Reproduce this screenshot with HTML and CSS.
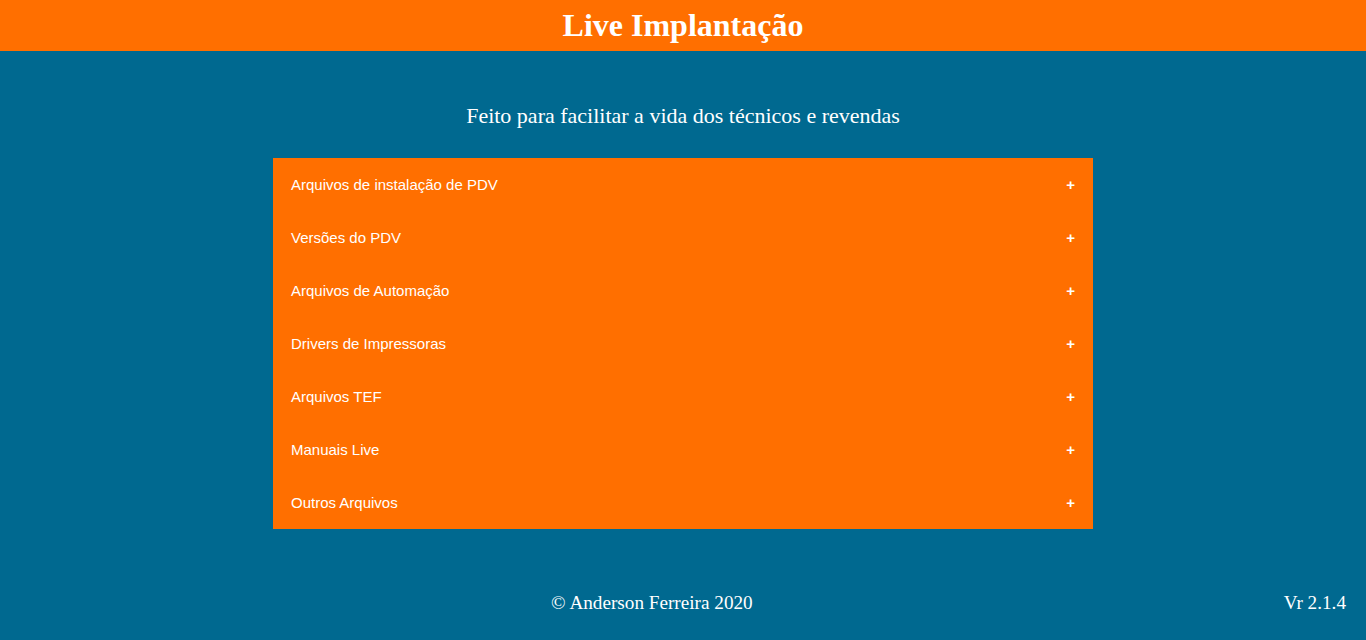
FILE: index.html
```html
<!DOCTYPE html>
<html lang="pt-BR">
<head>
<meta charset="utf-8">
<title>Live Implantação</title>
<link rel="stylesheet" href="styles.css">
</head>
<body>
<header class="topbar"><h1 class="title">Live Implantação</h1></header>
<main class="content">
  <p class="subtitle">Feito para facilitar a vida dos técnicos e revendas</p>
  <div class="accordion">
    <div class="row"><span>Arquivos de instalação de PDV</span><span class="plus">+</span></div>
    <div class="row"><span>Versões do PDV</span><span class="plus">+</span></div>
    <div class="row"><span>Arquivos de Automação</span><span class="plus">+</span></div>
    <div class="row"><span>Drivers de Impressoras</span><span class="plus">+</span></div>
    <div class="row"><span>Arquivos TEF</span><span class="plus">+</span></div>
    <div class="row"><span>Manuais Live</span><span class="plus">+</span></div>
    <div class="row"><span>Outros Arquivos</span><span class="plus">+</span></div>
  </div>
</main>
<footer class="footer">
  <span class="copy">© Anderson Ferreira 2020</span>
  <span class="version">Vr 2.1.4</span>
</footer>
</body>
</html>
```
FILE: styles.css
```css
html, body {
  margin: 0;
  padding: 0;
}
body {
  background: #006990;
  color: #fff;
  font-family: "Liberation Serif", "Times New Roman", serif;
  height: 640px;
  overflow: hidden;
}
.topbar {
  background: #ff6f00;
  height: 51px;
  display: flex;
  align-items: center;
  justify-content: center;
}
.title {
  margin: 0;
  font-size: 32px;
  font-weight: bold;
  line-height: 51px;
}
.content {
  display: flex;
  flex-direction: column;
  align-items: center;
}
.subtitle {
  margin: 51px 0 0;
  font-size: 22px;
  line-height: 28px;
  height: 56px;
}
.accordion {
  width: 820px;
  background: #ff6f00;
  display: flex;
  flex-direction: column;
}
.row {
  height: 53px;
  display: flex;
  align-items: center;
  justify-content: space-between;
  padding: 0 18px;
  font-family: "Liberation Sans", Arial, sans-serif;
  font-size: 15px;
}
.plus {
  font-weight: bold;
  font-size: 15px;
}
.footer {
  display: flex;
  align-items: center;
  margin-top: 60px;
  height: 28px;
  padding: 0 20px;
  font-size: 19.2px;
}
.copy {
  flex: 1;
  text-align: center;
}
```
